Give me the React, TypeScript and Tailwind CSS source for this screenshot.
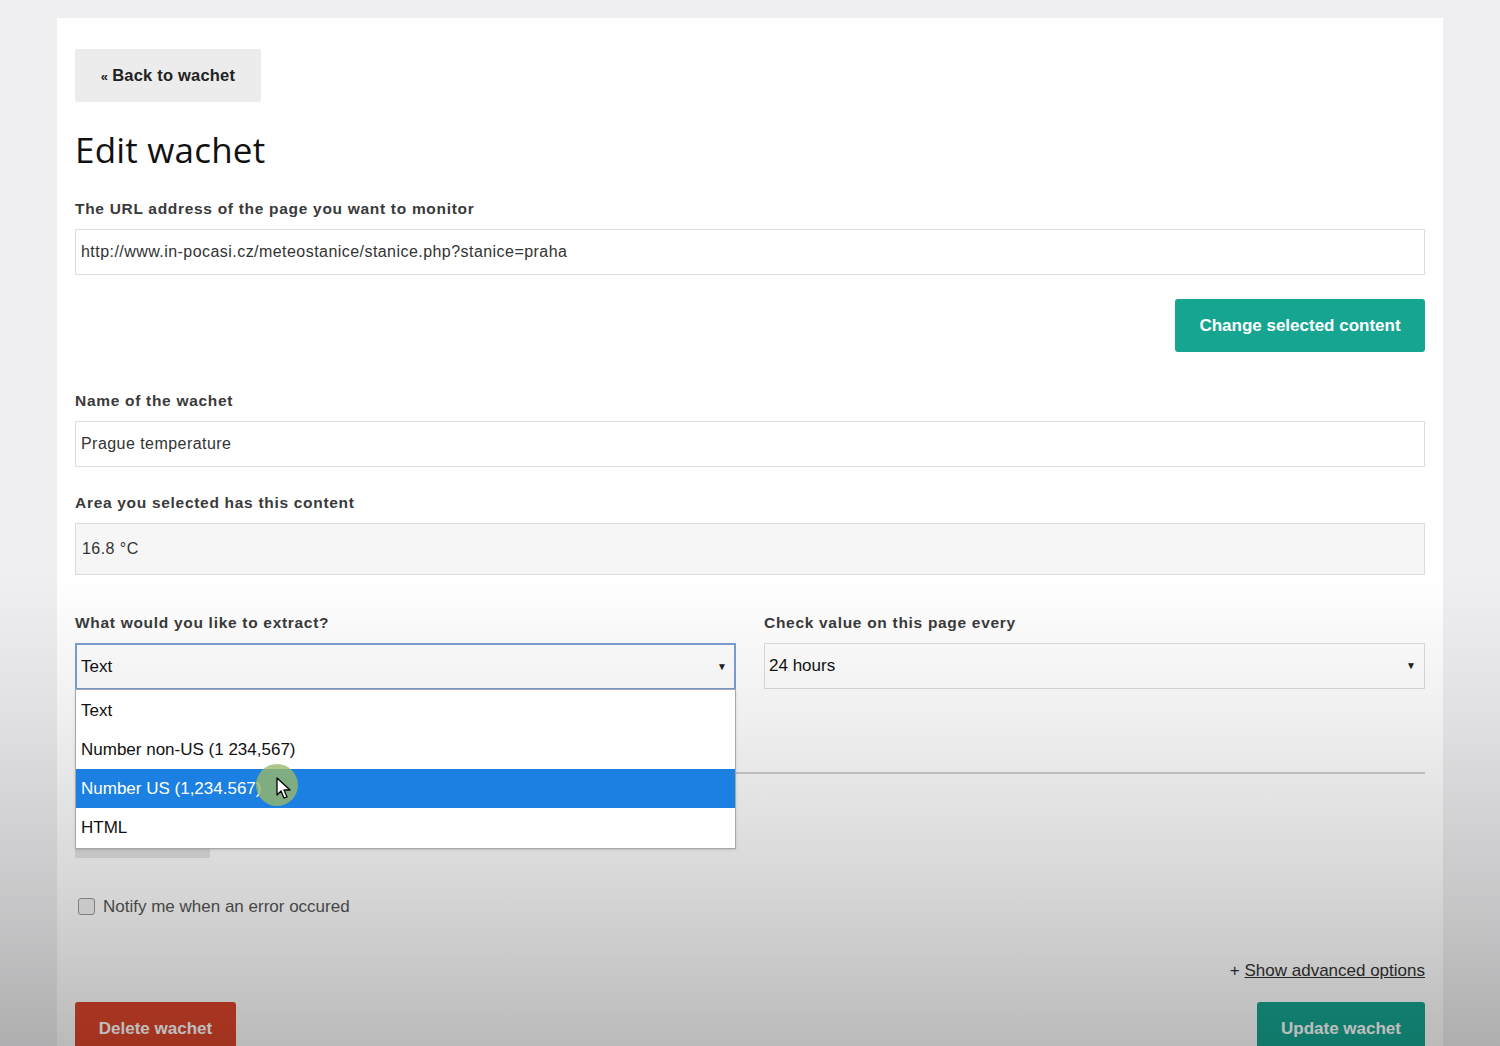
import { useState } from 'react';

const labelCls = 'block text-[15.5px] leading-5 font-bold text-[#3a3a3a] tracking-[0.7px]';
const inputCls =
  'w-full h-[46px] border border-[#dcdcdc] bg-white px-[5px] text-[16px] tracking-[0.45px] text-[#333] flex items-center';

const OPTIONS = ['Text', 'Number non-US (1 234,567)', 'Number US (1,234.567)', 'HTML'];

function Caret() {
  return <span className="text-[10px] text-[#222] leading-none">▼</span>;
}

function Cursor() {
  return (
    <div className="absolute left-[180px] top-[74px] pointer-events-none">
      <div className="absolute left-0 top-0 w-[42px] h-[42px] rounded-full bg-[#9ab86a]/80" />
      <svg className="absolute left-[20px] top-[13px]" width="16" height="24" viewBox="0 0 16 24">
        <path d="M1 1 L1 18 L5 14 L8 21 L11 20 L8 13 L14 13 Z" fill="#fff" stroke="#000" strokeWidth="1.3" strokeLinejoin="round" />
      </svg>
    </div>
  );
}

function ExtractSelect() {
  const [selected] = useState(0);
  return (
    <div className="relative">
      <div className="h-[47px] border-2 border-[#7e9fd6] bg-white pl-[4px] pr-[7px] flex items-center justify-between text-[17px] text-[#111]">
        <span>{OPTIONS[selected]}</span>
        <Caret />
      </div>
      <div className="absolute left-0 right-0 top-[46px] z-10 border border-[#a7a7a7] bg-white shadow-sm">
        <ul className="py-[1px]">
          {OPTIONS.map((o, i) => (
            <li
              key={o}
              className={
                'h-[39px] flex items-center pl-[5px] text-[17px] ' +
                (i === 2 ? 'bg-[#1c7fe2] text-white' : 'text-[#111]')
              }
            >
              {o}
            </li>
          ))}
        </ul>
        <Cursor />
      </div>
    </div>
  );
}

export default function App() {
  return (
    <div
      className="relative min-h-[1046px] h-[1046px] overflow-hidden bg-[#efeff1] px-[57px] pt-[18px]"
      style={{ fontFamily: '"Liberation Sans", Arial, sans-serif' }}
    >
      <div className="h-full bg-white px-[18px] pt-[31px]">
        <button className="h-[53px] w-[186px] bg-[#ececec] text-[16.5px] font-bold text-[#222] rounded-[2px] tracking-[0.2px]">
          <span className="text-[13px] mr-1">«</span>Back to wachet
        </button>

        <h1
          className="mt-[26px] text-[35px] leading-[44px] text-[#111] tracking-[0.2px]"
          style={{ fontFamily: '"Open Sans", sans-serif' }}
        >
          Edit wachet
        </h1>

        <label className={labelCls + ' mt-[27px]'}>The URL address of the page you want to monitor</label>
        <div className={inputCls + ' mt-[10px]'}>http://www.in-pocasi.cz/meteostanice/stanice.php?stanice=praha</div>

        <div className="flex justify-end mt-[24px]">
          <button className="h-[53px] w-[250px] bg-[#16a591] rounded-[3px] text-white font-bold text-[17px]">
            Change selected content
          </button>
        </div>

        <label className={labelCls + ' mt-[39px]'}>Name of the wachet</label>
        <div className={inputCls + ' mt-[10px]'}>Prague temperature</div>

        <label className={labelCls + ' mt-[26px]'}>Area you selected has this content</label>
        <div className="mt-[10px] h-[52px] w-full border border-[#dcdcdc] bg-[#f6f6f6] px-[6px] flex items-center text-[16px] tracking-[0.45px] text-[#333]">
          16.8 °C
        </div>

        <div className="mt-[38px] grid grid-cols-2 gap-[28px]">
          <div>
            <label className={labelCls}>What would you like to extract?</label>
            <div className="mt-[10px]">
              <ExtractSelect />
            </div>
          </div>
          <div>
            <label className={labelCls}>Check value on this page every</label>
            <div className="mt-[10px] h-[46px] border border-[#dcdcdc] bg-white pl-[4px] pr-[8px] flex items-center justify-between text-[17px] text-[#111]">
              <span>24 hours</span>
              <Caret />
            </div>
          </div>
        </div>

        <hr className="mt-[82px] border-0 h-[2px] bg-[#cfcfcf]" />

        <div className="mt-[34px] h-[50px] w-[135px] bg-[#e6e6e6] rounded-[2px]" />

        <label className="mt-[36px] flex items-center gap-[8px] pl-[3px] text-[17px] text-[#555]">
          <span className="w-[17px] h-[17px] border border-[#999] rounded-[3px] bg-[#f2f2f2]" />
          Notify me when an error occured
        </label>

        <div className="mt-[38px] text-right text-[17px] text-[#333]">
          + <span className="underline">Show advanced options</span>
        </div>

        <div className="mt-[19px] flex justify-between">
          <button className="h-[54px] w-[161px] bg-[#dc452a] rounded-[3px] text-white font-bold text-[17px]">
            Delete wachet
          </button>
          <button className="h-[54px] w-[168px] bg-[#16a591] rounded-[3px] text-white font-bold text-[17px]">
            Update wachet
          </button>
        </div>
      </div>

      <div className="absolute inset-0 pointer-events-none bg-[linear-gradient(to_bottom,rgba(0,0,0,0)_0%,rgba(0,0,0,0)_55%,rgba(0,0,0,0.06)_68%,rgba(0,0,0,0.16)_85%,rgba(0,0,0,0.27)_100%)]" />
    </div>
  );
}
